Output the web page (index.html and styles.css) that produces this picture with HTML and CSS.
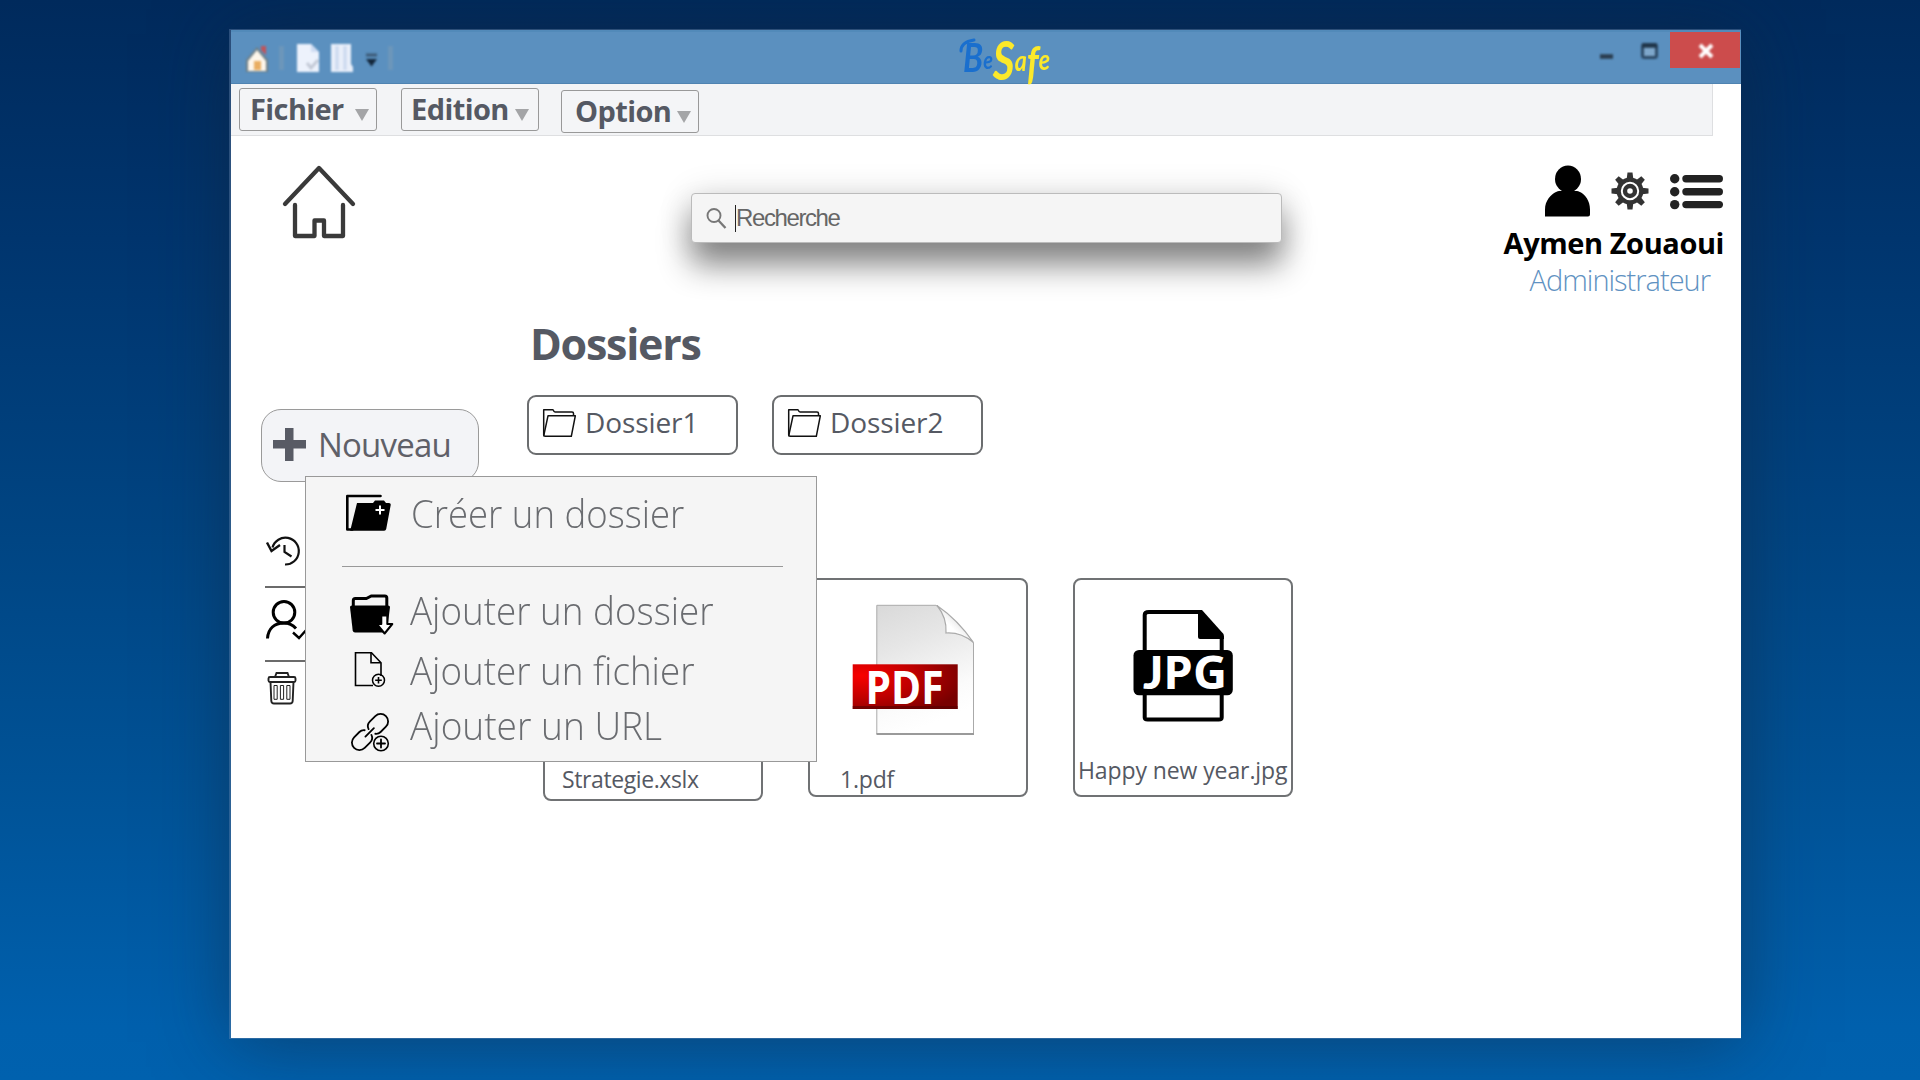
FILE: index.html
```html
<!DOCTYPE html>
<html lang="fr">
<head>
<meta charset="utf-8">
<title>BeSafe</title>
<link rel="stylesheet" href="styles.css">
</head>
<body>
<div class="window">
  <header class="titlebar">
    <div class="quick">
      <svg class="soft" width="28" height="32" viewBox="243 43 28 32"><path d="M246 61L257 48l11 13v12h-22z" fill="#6f7f86"/><path d="M261 47h5v9l-5-5z" fill="#c0545a"/><path d="M248 62l9-11 9 11v10h-18z" fill="#fdf6ea"/><path d="M254 62h7v9h-7z" fill="#e9ae62"/></svg>
      <span class="divider"></span>
      <svg class="soft" width="26" height="32" viewBox="295 43 26 32"><path d="M297 45h14l8 8v20h-22z" fill="#edf2fc"/><path d="M311 45v8h8" fill="#cfdcf2"/><path d="M307 64l4 5 7-8" fill="none" stroke="#c3c9d6" stroke-width="3"/></svg>
      <svg class="soft" width="26" height="32" viewBox="329 43 26 32"><path d="M331 45h20v20l2 3v5h-22z" fill="#e9effa"/><path d="M337 47v24M345 47v24" stroke="#cbd8ee" stroke-width="3"/></svg>
      <svg class="soft arrow" width="16" height="18" viewBox="364 51 16 18"><path d="M366 56h11" stroke="#3c5a76" stroke-width="3"/><path d="M366 60h11l-5.500 7.500z" fill="#13263a"/></svg>
      <span class="divider"></span>
    </div>
    <svg class="logo" width="110" height="52" viewBox="950 32 110 52" role="img" aria-label="BeSafe">
      <path d="M961 51q0-9 13-11" fill="none" stroke="#1a6fce" stroke-width="3" stroke-linecap="round"/>
      <text x="963" y="72" fill="#1a6fce" textLength="87" lengthAdjust="spacingAndGlyphs"><tspan font-size="41">B</tspan><tspan font-size="25" y="69">e</tspan><tspan fill="#fce92a" font-size="53" y="80">S</tspan><tspan fill="#fce92a" font-size="29" y="71">a</tspan><tspan fill="#fce92a" font-size="45" y="79">f</tspan><tspan fill="#fce92a" font-size="29" y="70">e</tspan></text>
    </svg>
    <div class="controls">
      <svg class="soft" width="62" height="24" viewBox="1598 38 62 24"><path d="M1600 55.500h13" stroke="#2a3c4e" stroke-width="4.500"/><rect x="1642.500" y="43.500" width="14" height="13" rx="2" fill="#7ea7cb" stroke="#2d4a66" stroke-width="3"/><path d="M1642 44.500h15" stroke="#1f3448" stroke-width="4.500"/></svg>
      <div class="close"><svg class="soft" width="16" height="16" viewBox="0 0 16 16"><path d="M2 2l12 12M14 2L2 14" stroke="#fff" stroke-width="4"/></svg></div>
    </div>
  </header>

  <nav class="menubar">
    <button class="menu-button">Fichier<i class="caret wide"></i></button>
    <button class="menu-button edition">Edition<i class="caret"></i></button>
    <button class="menu-button lowered">Option<i class="caret"></i></button>
  </nav>

  <section class="top">
    <svg class="home" width="76" height="76" viewBox="281 164 76 76" fill="none" stroke="#3a3a3a" stroke-width="4.300" stroke-linecap="round" stroke-linejoin="round"><path d="M285 204l34-36 34 36"/><path d="M295 205v31h19.500v-15.500h9.500V236H343v-31"/></svg>
    <label class="search">
      <svg width="22" height="22" viewBox="706 206 22 22" fill="none" stroke="#777" stroke-width="1.900"><circle cx="714" cy="214.500" r="6.500"/><path d="M718.500 219.500l7 7.500" stroke-width="2.300"/></svg>
      <span class="placeholder">Recherche</span>
    </label>
    <div class="profile">
      <div class="profile-icons">
        <svg width="46" height="52" viewBox="1545 165 46 52"><ellipse cx="1568" cy="179" rx="13" ry="13.500"/><path d="M1545 216.500v-7c0-9 6-15 11-17.500 3-2 21-2 24 0 5 2.500 10 8.500 10 17.500v5q0 2-2 2z"/></svg>
        <svg class="gear" width="38" height="38" viewBox="-19 -19 38 38" fill="#333"><g id="t"><path id="tooth" d="M-3.300-12l.8-6.500h5L3.300-12z"/><use href="#tooth" transform="rotate(45)"/><use href="#tooth" transform="rotate(90)"/><use href="#tooth" transform="rotate(135)"/></g><use href="#t" transform="rotate(180)"/><circle r="11.300" fill="none" stroke="#333" stroke-width="4.200"/><circle r="5" fill="none" stroke="#333" stroke-width="4.400"/></svg>
        <svg width="54" height="38" viewBox="1670 173 54 38" fill="#222"><circle cx="1674.700" cy="178.700" r="4.700"/><circle cx="1674.700" cy="191.700" r="4.700"/><circle cx="1674.700" cy="204.600" r="4.700"/><rect x="1682.300" y="175" width="40.700" height="7.400" rx="3.700"/><rect x="1682.300" y="188" width="40.700" height="7.400" rx="3.700"/><rect x="1682.300" y="200.900" width="40.700" height="7.400" rx="3.700"/></svg>
      </div>
      <div class="name">Aymen Zouaoui</div>
      <div class="role">Administrateur</div>
    </div>
  </section>

  <div class="body">
    <aside class="sidebar">
      <button class="new"><i class="plus"></i>Nouveau</button>
      <div class="dropdown">
        <div class="item create">
          <svg width="50" height="72" viewBox="345 477 50 72"><path d="M380.500 496h-33.200v33.500h5" fill="none" stroke="#000" stroke-width="2.600" stroke-linejoin="round" stroke-linecap="round"/><path d="M357 503h16l2-2.500h9l2 2.500h3q2 0 1.700 2l-4.500 24q-.4 1.800-2 1.800h-34z"/><path d="M380 505.500v9M375.500 510h9" stroke="#fff" stroke-width="2"/></svg>
          <span>Créer un dossier</span>
        </div>
        <hr>
        <div class="item folder">
          <svg width="50" height="55" viewBox="345 582 50 55"><path d="M353.300 607v-7.500q0-2 2-2h11l5-2.500h13.500q2 0 2 2v10" fill="none" stroke="#000" stroke-width="3"/><path d="M350 606q0-1.500 2-1.500h36q2 0 2 1.500l-3 24q-.3 1.500-2 1.500h-30q-2 0-2.300-2z"/><path d="M381.300 614.500h6v8.500h5l-7.700 9.500-7.800-9.500h4.500z" fill="#fff" stroke="#000" stroke-width="2" stroke-linejoin="round"/></svg>
          <span>Ajouter un dossier</span>
        </div>
        <div class="item file">
          <svg width="50" height="65" viewBox="345 637 50 65" fill="none" stroke="#000" stroke-width="1.600"><path d="M373 685.500h-17.500v-32.700h16l9.500 10V676"/><path d="M371 653v9.800h10"/><circle cx="378.500" cy="680.300" r="6" stroke-width="1.500"/><path d="M378.500 677v6.600M375.200 680.300h6.600"/></svg>
          <span>Ajouter un fichier</span>
        </div>
        <div class="item url">
          <svg width="50" height="46" viewBox="345 702 50 46" fill="none" stroke="#000" stroke-width="1.800" stroke-linecap="round"><g transform="translate(1 0) rotate(-45 369 732)"><path d="M368 727.500q1.500-4.500 6.500-4.500h7.500a7.500 7.500 0 0 1 0 15h-7.500q-3 0-5-2.500" transform="translate(2 1.500)"/><path d="M370 736.500q-1.500 4.500-6.500 4.500h-7.500a7.500 7.500 0 0 1 0-15h7.500q3 0 5 2.500" transform="translate(-2 -1.500)"/><path d="M362.500 732h12"/></g><circle cx="381" cy="743.500" r="7.300" stroke-width="1.600" fill="#f5f5f5"/><path d="M381 739.500v8M377 743.500h8"/></svg>
          <span>Ajouter un URL</span>
        </div>
      </div>
      <ul class="shortcuts">
        <li class="history"><svg width="40" height="36" viewBox="265 533 40 36" fill="none" stroke="#111" stroke-width="2.200"><path d="M285 564.500a13.400 13.400 0 1 0-12.500-17"/><path d="M267 542.500l4.500 8.500 8.500-6" stroke-width="2.400"/><path d="M284.500 545v7l7 4.500"/></svg></li>
        <li class="user"><svg width="44" height="44" viewBox="265 599 44 44" fill="none" stroke="#000" stroke-width="3"><circle cx="284" cy="612.300" r="10.800"/><path d="M267.500 638.500c.5-10 7-15.500 16.500-15.500 4.500 0 8.500 1.700 12 5.500"/><path d="M293 632.500l6 5.500 9-10" stroke-width="2.400"/></svg></li>
        <li class="trash"><svg width="40" height="36" viewBox="265 670 40 36" fill="none" stroke="#222" stroke-width="1.900"><path d="M275 677l1.500-4h11l1.500 4"/><rect x="268.500" y="677" width="27" height="5" rx="1.500"/><path d="M270.500 682l.8 19q.2 2.500 2.700 2.500h16q2.500 0 2.700-2.500l.8-19"/><path d="M274 685.500h3.200v13.800H274zM280.400 685.500h3.200v13.800h-3.200zM286.800 685.500h3.200v13.800h-3.200z" stroke-width="1"/></svg></li>
      </ul>
    </aside>

    <main class="content">
      <h1>Dossiers</h1>
      <div class="folders">
        <div class="folder-card"><svg width="36" height="32" viewBox="542 407 36 32" fill="none" stroke="#111" stroke-width="1.500" stroke-linejoin="round"><path d="M543.700 435v-25.300h9.300q1 2.200 2 2.200h17q1.500 0 1.500 1.500v2"/><path d="M543.700 435.800l4.300-20h27.300l-4 20.500h-26z"/></svg><span>Dossier1</span></div>
        <div class="folder-card"><svg width="36" height="32" viewBox="542 407 36 32" fill="none" stroke="#111" stroke-width="1.500" stroke-linejoin="round"><path d="M543.700 435v-25.300h9.300q1 2.200 2 2.200h17q1.500 0 1.500 1.500v2"/><path d="M543.700 435.800l4.300-20h27.300l-4 20.500h-26z"/></svg><span>Dossier2</span></div>
      </div>
      <div class="files">
        <div class="file-card sheet"><span>Strategie.xslx</span></div>
        <div class="file-card pdf">
          <svg width="110" height="136" viewBox="850 602 110 136" overflow="visible">
            <defs>
              <linearGradient id="paper" x1="0" y1="0" x2=".3" y2="1"><stop offset="0" stop-color="#d9d9d9"/><stop offset=".35" stop-color="#e6e6e6"/><stop offset=".8" stop-color="#fbfbfb"/><stop offset="1" stop-color="#fff"/></linearGradient>
              <linearGradient id="curl" x1="0" y1="1" x2="1" y2="0"><stop offset="0" stop-color="#fff"/><stop offset=".4" stop-color="#fff"/><stop offset="1" stop-color="#bbb"/></linearGradient>
              <radialGradient id="red" cx=".08" cy=".25" r="1"><stop offset="0" stop-color="#f80000"/><stop offset=".5" stop-color="#c00000"/><stop offset="1" stop-color="#780000"/></radialGradient>
            </defs>
            <path d="M876.800 605.300H936Q957 620 973.500 642.800V734H876.800z" fill="url(#paper)" stroke="#aaa" stroke-width="1"/>
            <path d="M876.500 734h97.500" stroke="#9a9a9a" stroke-width="2"/>
            <path d="M937 605.500q10 12 9 27.500 15-1 27.500 9.500Q958 620 937 605.500z" fill="url(#curl)" stroke="#aaa" stroke-width="1.200"/>
            <rect x="852.700" y="664.300" width="105" height="44.700" fill="url(#red)"/>
            <path d="M852.700 707.500h105" stroke="#500" stroke-width="3" opacity=".6"/>
            <text x="865.500" y="703.500" class="badge" font-size="47" textLength="78" lengthAdjust="spacingAndGlyphs">PDF</text>
          </svg>
          <span>1.pdf</span>
        </div>
        <div class="file-card jpg">
          <svg width="102" height="114" viewBox="1132 609 102 114">
            <path d="M1200 612h-51q-4.300 0-4.300 3v102.500q0 2 3 2h71q3 0 3-2V637z" fill="#fff" stroke="#000" stroke-width="4"/>
            <path d="M1198 610h4l21.500 24q.5 1 .5 5h-24q-2 0-2-2z"/>
            <rect x="1133.500" y="650" width="99.300" height="45.300" rx="5.500"/>
            <text x="1143" y="688.500" class="badge" font-size="46" textLength="84" lengthAdjust="spacingAndGlyphs"><tspan class="badge-j">J</tspan>PG</text>
          </svg>
          <span>Happy new year.jpg</span>
        </div>
      </div>
    </main>
  </div>
</div>
</body>
</html>
```
FILE: styles.css
```css
* { box-sizing: border-box; }

body {
  margin: 0;
  height: 1080px;
  padding: 30px 0 0 231px;
  overflow: hidden;
  background: linear-gradient(#002a5c 0%, #00356e 22%, #004583 50%, #005296 72%, #0060ad 95%, #0061ae 100%);
  font-family: "Open Sans", "Noto Sans", sans-serif;
  color: #555963;
}

button { font: inherit; color: inherit; margin: 0; }
svg { display: block; flex: none; }

.window {
  width: 1510px;
  height: 1008px;
  background: #fff;
  box-shadow: -1px 0 0 1px rgba(120, 150, 190, .35), 0 4px 70px rgba(20, 35, 55, .5);
}

/* title bar */
.titlebar {
  display: flex;
  height: 54px;
  background: #5b90bf;
  border-top: 2px solid #528ab9;
  box-shadow: inset 0 -1px 0 #4f83b1;
}
.quick { display: flex; align-items: center; width: 719px; padding-left: 12px; }
.quick > svg + svg { margin-left: 8px; }
.quick > .arrow { margin-left: 9px; margin-top: 2px; }
.soft { filter: blur(.8px); }
.divider { width: 5px; height: 24px; margin: 0 9px 0 8px; background: #789bb8; opacity: .6; filter: blur(1px); }
.divider + svg { margin-left: 2px; }
.logo { overflow: visible; font-family: Lato, sans-serif; font-style: italic; font-weight: 700; filter: blur(.3px); }
.controls { display: flex; margin-left: auto; }
.controls > svg { margin: 7px 10px 0 0; }
.close {
  display: grid;
  place-items: center;
  width: 70px;
  height: 36px;
  margin-right: 1px;
  padding: 2px 0 0 2px;
  background: #cc4c4c;
}

/* menu bar */
.menubar {
  display: flex;
  width: 1482px;
  height: 52px;
  padding: 4px 0 0 8px;
  background: #f3f4f6;
  border: solid #dedfe1;
  border-width: 0 1px 1px 0;
}
.menu-button {
  display: flex;
  align-items: center;
  width: 138px;
  height: 43px;
  padding: 0 0 1px 10px;
  margin-right: 24px;
  background: #f4f5f7;
  border: 1px solid #999;
  border-radius: 3px;
  font-weight: 700;
  font-size: 29px;
  line-height: 38px;
  letter-spacing: -.6px;
}
.menu-button.edition { padding-left: 9px; }
.menu-button.lowered { margin: 2px 0 0 -2px; padding-left: 13px; }
.caret {
  margin: 12px 0 0 6px;
  border: solid transparent;
  border-width: 12.500px 7.500px 0;
  border-top-color: #a4a5a7;
}
.caret.wide { margin-left: 11px; }

/* search and profile */
.top { display: flex; height: 174px; }
.home { margin: 28px 0 0 50px; }
.search {
  display: flex;
  align-items: center;
  width: 591px;
  height: 50px;
  margin: 57px 0 0 334px;
  padding-left: 14px;
  background: #f5f5f5;
  border: 1px solid #bbb;
  border-radius: 4px;
  box-shadow: 0 22px 32px rgba(0, 0, 0, .46), 0 2px 34px rgba(0, 0, 0, .14);
}
.placeholder {
  height: 27px;
  margin: 0 0 0 7px;
  border-left: 1px solid #222;
  font: 24px/26px "Liberation Sans", Arial, sans-serif;
  letter-spacing: -1.400px;
  color: #666;
}
.profile { display: flex; flex-direction: column; align-items: flex-end; margin: 30px 17px 0 auto; }
.profile-icons { display: flex; align-items: flex-start; height: 57px; }
.profile-icons > svg { margin: -1px 1px 0 0; }
.profile-icons > .gear { margin: 6px 3px 0 19px; }
.profile-icons > svg:last-child { margin: 7px 0 0 18px; }
.name { font-weight: 700; font-size: 29px; line-height: 40px; letter-spacing: -.42px; color: #000; }
.role { margin: -2px 14px 0 0; font-weight: 300; font-size: 29px; line-height: 38px; letter-spacing: -1px; color: #5f92c2; }

/* body columns */
.body { display: grid; grid-template-columns: 266px 1fr; padding-left: 30px; }

.sidebar { position: relative; padding-top: 99px; }
.new {
  display: flex;
  align-items: center;
  width: 218px;
  height: 73px;
  padding: 0 0 3px 11px;
  background: #f3f4f7;
  border: 1px solid #9a9a9a;
  border-radius: 20px;
  font-size: 33px;
  font-weight: 400;
  letter-spacing: -.8px;
  color: #5f6068;
}
.plus {
  width: 33px;
  height: 33px;
  margin: 1px 12px 0 0;
  background:
    linear-gradient(#585b65 0 0) center / 8.500px 100% no-repeat,
    linear-gradient(#585b65 0 0) center / 100% 8.500px no-repeat;
}
.shortcuts { list-style: none; margin: 0; padding: 51px 0 0 4px; width: 60px; }
.shortcuts li + li { border-top: 2px solid #6b6b6b; }
.history { height: 53px; }
.user { height: 74px; padding-top: 11px; }
.trash { padding-top: 8px; }

/* dropdown of the Nouveau button */
.dropdown {
  position: absolute;
  z-index: 2;
  left: 44px;
  top: 166px;
  width: 512px;
  height: 286px;
  background: #f5f5f5;
  border: 1px solid #999;
}
.item { display: flex; align-items: center; gap: 16px; padding-left: 39px; }
.item svg { overflow: visible; }
.item span { font-weight: 300; font-size: 38px; line-height: 46px; color: #6a6c70; transform: scaleX(.968); transform-origin: 0 50%; white-space: nowrap; }
.dropdown hr { width: 441px; height: 1px; margin: 17px 0 15px 36px; border: 0; background: #999; }
.create { height: 72px; }
.create span { transform: scaleX(.962); }
.folder { height: 55px; }
.folder svg { margin: 1px 0 -1px; }
.folder span, .file span, .url span { margin-left: -1px; }
.file { height: 65px; }
.url { height: 46px; }
.url span { transform: scaleX(.975); }

/* folders and files */
.content { padding-top: 6px; }
h1 { margin: 0 0 0 3px; font-weight: 700; font-size: 43px; line-height: 56px; height: 79px; letter-spacing: -1.250px; }
.folders { display: flex; gap: 34px; }
.folder-card {
  display: flex;
  align-items: center;
  width: 211px;
  height: 60px;
  padding: 0 0 6px 13px;
  border: 2px solid #6b6d6f;
  border-radius: 9px;
  font-size: 28px;
  line-height: 38px;
  letter-spacing: -.1px;
}
.folder-card svg { margin: 2px 7px 0 0; }
.files { display: flex; gap: 45px; padding: 123px 0 0 16px; }
.file-card {
  display: flex;
  flex-direction: column;
  width: 220px;
  height: 219px;
  border: 2px solid #707274;
  border-radius: 8px;
  font-size: 23px;
  line-height: 30px;
}
.sheet { margin-top: 4px; }
.sheet span { margin: 180px 0 0 17px; letter-spacing: -.4px; }
.pdf svg { margin: 22px 0 0 40px; }
.pdf span { margin: 26px 0 0 30px; letter-spacing: -.2px; }
.jpg svg { margin: 29px 0 0 57px; }
.jpg span { margin: 32px 0 0 3px; letter-spacing: -.1px; white-space: nowrap; }
.badge { font-family: "Open Sans", sans-serif; font-weight: 700; fill: #fff; }
.badge-j { font-family: Lato, sans-serif; font-weight: 900; }
```
